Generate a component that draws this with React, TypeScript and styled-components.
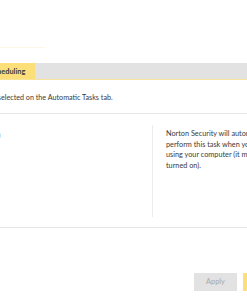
import React from "react";
import styled, { createGlobalStyle } from "styled-components";

const Global = createGlobalStyle`
  html, body { margin: 0; padding: 0; background: #ffffff; overflow: hidden; }
  body { font-family: Lato, "Noto Sans", sans-serif; color: #3a3a3a; }
`;

const Page = styled.div`
  width: 247px;
  height: 296px;
  overflow: hidden;
  display: flex;
  flex-direction: column;
  background: #fff;
`;

const TopArea = styled.div`
  height: 63px;
  display: flex;
  flex-direction: column;
  justify-content: flex-end;
  padding-bottom: 15px;
  box-sizing: border-box;
`;

const FaintHeader = styled.div`
  width: 45px;
  height: 1px;
  background: #fcf7e6;
`;

const TabBar = styled.div`
  height: 16px;
  display: flex;
  background: #e2e2e2;
  border-bottom: 1px solid #f7e49a;
`;

const Tab = styled.div<{ $active?: boolean }>`
  width: 35px;
  background: ${(p) => (p.$active ? "#fcdf79" : "transparent")};
  font-size: 7.4px;
  font-weight: 700;
  color: #3a3a3a;
  line-height: 17px;
  overflow: hidden;
  white-space: nowrap;
  text-indent: -10.5px;
`;

const Description = styled.div`
  margin-top: 12px;
  font-size: 7.2px;
  line-height: 12px;
  white-space: nowrap;
  overflow: hidden;
  text-indent: -41px;
  color: #3a3a3a;
`;

const Divider = styled.div<{ $top: number }>`
  margin-top: ${(p) => p.$top}px;
  height: 1px;
  background: #e6e6e6;
`;

const ContentRow = styled.div`
  display: flex;
  height: 113px;
`;

const LeftColumn = styled.div`
  width: 152px;
  flex-shrink: 0;
  padding-top: 16px;
  box-sizing: border-box;
  font-size: 7.4px;
  line-height: 12px;
  overflow: hidden;
  white-space: nowrap;
  text-indent: -15px;
  color: #666;
`;

const RightColumn = styled.div`
  margin-top: 11px;
  height: 92px;
  flex-shrink: 0;
  border-left: 1px solid #ececec;
  padding-left: 13px;
  padding-top: 4px;
  box-sizing: border-box;
  font-size: 7.3px;
  line-height: 10.7px;
  white-space: nowrap;
  color: #3a3a3a;
`;

const Footer = styled.div`
  flex: 1;
  display: flex;
  justify-content: flex-end;
  align-items: flex-start;
  padding-top: 45px;
  gap: 6px;
  margin-right: -40px;
`;

const Button = styled.div<{ $primary?: boolean }>`
  width: ${(p) => (p.$primary ? "44px" : "43px")};
  height: 18px;
  background: ${(p) => (p.$primary ? "#fcdf79" : "#e2e2e2")};
  color: ${(p) => (p.$primary ? "#3a3a3a" : "#a8a8a8")};
  font-size: 7.4px;
  line-height: 18px;
  text-align: center;
  flex-shrink: 0;
`;

export default function App() {
  return (
    <Page>
      <Global />
      <TopArea>
        <FaintHeader />
      </TopArea>
      <TabBar>
        <Tab $active>Scheduling</Tab>
      </TabBar>
      <Description>Options are selected on the Automatic Tasks tab.</Description>
      <Divider $top={9} />
      <ContentRow>
        <LeftColumn>(Idle)</LeftColumn>
        <RightColumn>
          Norton Security will automatically
          <br />
          perform this task when you're not
          <br />
          using your computer (it must be
          <br />
          turned on).
        </RightColumn>
      </ContentRow>
      <Divider $top={0} />
      <Footer>
        <Button>Apply</Button>
        <Button $primary>OK</Button>
      </Footer>
    </Page>
  );
}
